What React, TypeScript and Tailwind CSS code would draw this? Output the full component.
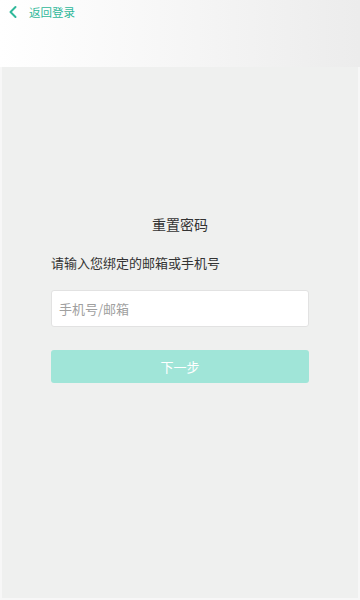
import React from "react";

export default function App() {
  const font = { fontFamily: '"Noto Sans CJK SC", "Noto Sans", sans-serif' };
  return (
    <div className="w-[360px] h-[600px] bg-[#f7f7f7] px-[2px] pb-[2px] flex flex-col" style={font}>
      <div className="h-[67px] bg-gradient-to-r from-white via-[#f6f6f6] to-[#ececec] flex items-start pl-[8px] pt-[3px] -mx-[2px]">
        <div className="flex items-center h-[18px]">
          <svg width="12" height="14" viewBox="0 0 12 14" className="mr-[9px]">
            <path d="M7.5 2 L2.5 7 L7.5 12" fill="none" stroke="#2fb89a" strokeWidth="2" strokeLinecap="round" strokeLinejoin="round" />
          </svg>
          <span className="text-[11.5px] leading-[18px] text-[#2fb89a]">返回登录</span>
        </div>
      </div>
      <div className="flex-1 bg-[#eff0ef] flex flex-col items-stretch px-[49px] pt-[147px]">
        <div className="text-center text-[14px] leading-[20px] text-[#333]">重置密码</div>
        <div className="mt-[19px] text-[13px] leading-[20px] text-[#333]">请输入您绑定的邮箱或手机号</div>
        <div className="mt-[17px] h-[37px] bg-white border border-[#e2e2e2] rounded-[3px] flex items-center pl-[7px]">
          <span className="text-[13px] text-[#a0a0a0]">手机号/邮箱</span>
        </div>
        <div className="mt-[23px] h-[33px] bg-[#a0e5d8] rounded-[3px] flex items-center justify-center">
          <span className="text-[13px] text-white">下一步</span>
        </div>
      </div>
    </div>
  );
}
